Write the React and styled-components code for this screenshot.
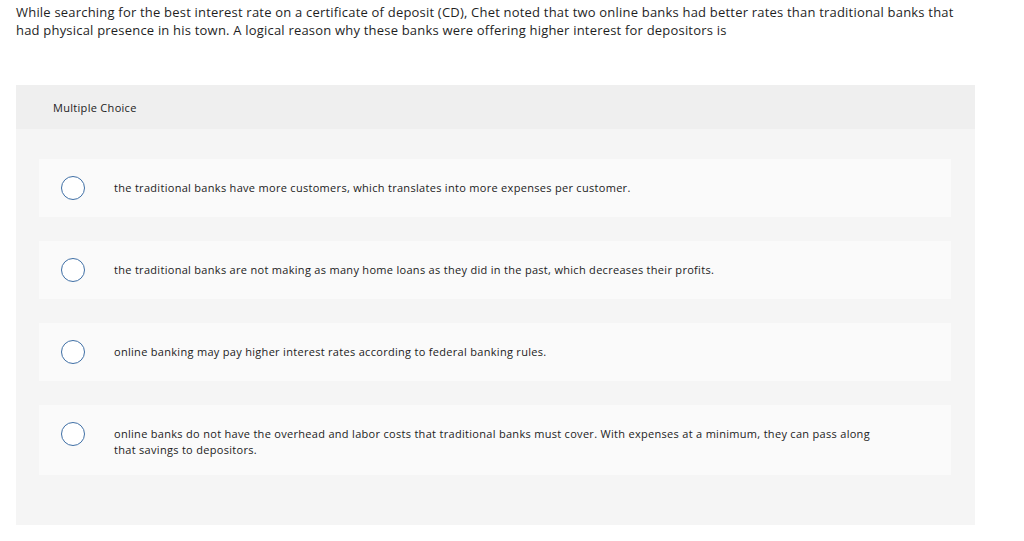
import React from 'react'
import styled, { createGlobalStyle } from 'styled-components'

const Global = createGlobalStyle`
  body {
    margin: 0;
    background: #fff;
    font-family: "Open Sans", "Liberation Sans", sans-serif;
    color: #222;
  }
`

const Page = styled.div`
  padding: 3px 16px 0 16px;
  width: 1024px;
  box-sizing: border-box;
`

const Question = styled.p`
  margin: 0;
  font-size: 13px;
  line-height: 18px;
  letter-spacing: 0.2px;
  color: #1f1f1f;
  width: 945px;
`

const Panel = styled.div`
  margin-top: 46px;
  width: 959px;
  background: #f5f5f5;
  padding-bottom: 50px;
`

const Header = styled.div`
  height: 44px;
  display: flex;
  align-items: center;
  padding-left: 37px;
  background: #efefef;
  font-size: 11px;
  letter-spacing: 0.3px;
  color: #222;
`

const List = styled.div`
  display: flex;
  flex-direction: column;
  gap: 24px;
  padding: 30px 24px 0 23px;
`

const Option = styled.label`
  display: flex;
  min-height: 58px;
  padding-left: 22px;
  background: #fafafa;
  box-sizing: border-box;
  padding-top: ${p => (p.tall ? '21px' : '0')};
  padding-bottom: ${p => (p.tall ? '17px' : '0')};
  align-items: ${p => (p.tall ? 'flex-start' : 'center')};
`

const Radio = styled.span`
  flex: none;
  width: 24px;
  height: 24px;
  border: 1px solid #3f6fa5;
  border-radius: 50%;
  background: #fff;
  box-sizing: border-box;
  margin-right: 29px;
  margin-top: ${p => (p.tall ? '-4px' : '0')};
`

const Text = styled.span`
  font-size: 11px;
  line-height: 16px;
  letter-spacing: 0.3px;
  color: #222;
  max-width: 780px;
`

const options = [
  'the traditional banks have more customers, which translates into more expenses per customer.',
  'the traditional banks are not making as many home loans as they did in the past, which decreases their profits.',
  'online banking may pay higher interest rates according to federal banking rules.',
  'online banks do not have the overhead and labor costs that traditional banks must cover. With expenses at a minimum, they can pass along that savings to depositors.',
]

export default function App() {
  return (
    <Page>
      <Global />
      <Question>
        While searching for the best interest rate on a certificate of deposit (CD), Chet noted that two online banks had better rates than traditional banks that had physical presence in his town. A logical reason why these banks were offering higher interest for depositors is
      </Question>
      <Panel>
        <Header>Multiple Choice</Header>
        <List>
          {options.map((o, i) => {
            const tall = i === 3
            return (
              <Option key={i} tall={tall}>
                <Radio tall={tall} />
                <Text>{o}</Text>
              </Option>
            )
          })}
        </List>
      </Panel>
    </Page>
  )
}
